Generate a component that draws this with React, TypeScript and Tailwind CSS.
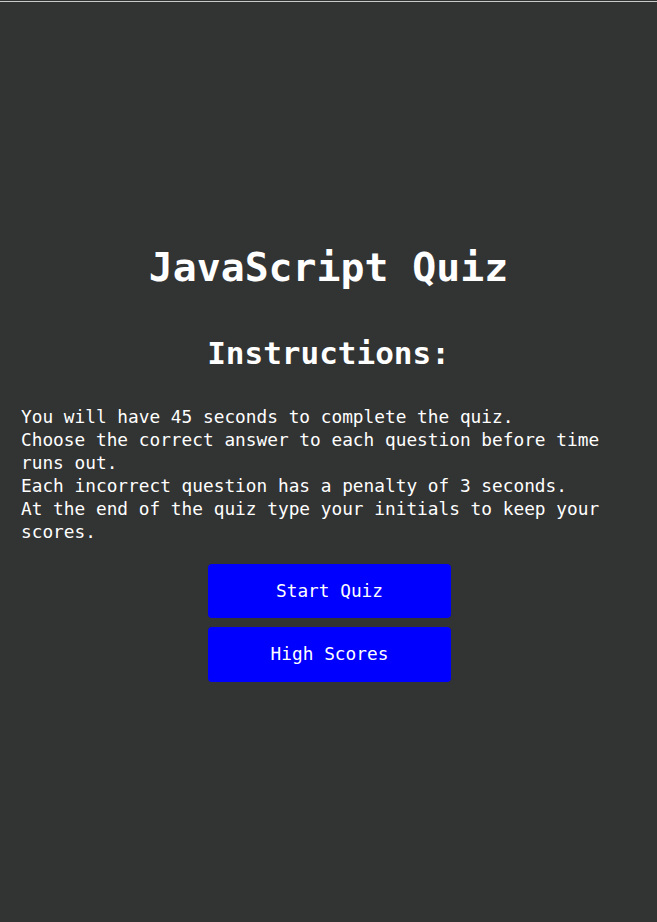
export default function App() {
  return (
    <div className="min-h-[922px] bg-[#323333] text-white font-['DejaVu_Sans_Mono','Liberation_Mono',monospace]">
      <div className="h-px bg-[#323333]" />
      <div className="h-px bg-[#c9caca]" />
      <main className="px-[21px] pt-[241px] flex flex-col">
        <h1 className="text-center text-[39.8px] leading-[48px] font-bold">JavaScript Quiz</h1>
        <h2 className="mt-[43px] text-center text-[31px] leading-[38px] font-bold">Instructions:</h2>
        <p className="mt-[33px] text-[17.8px] leading-[23px]">
          You will have 45 seconds to complete the quiz.
          <br />
          Choose the correct answer to each question before time runs out.
          <br />
          Each incorrect question has a penalty of 3 seconds.
          <br />
          At the end of the quiz type your initials to keep your scores.
        </p>
        <div className="mt-[21px] pl-[2px] flex flex-col items-center gap-[9px]">
          <button className="w-[243px] h-[54px] rounded-[4px] bg-[#0000ff] text-[17.8px] text-white">Start Quiz</button>
          <button className="w-[243px] h-[55px] rounded-[4px] bg-[#0000ff] text-[17.8px] text-white">High Scores</button>
        </div>
      </main>
    </div>
  )
}
